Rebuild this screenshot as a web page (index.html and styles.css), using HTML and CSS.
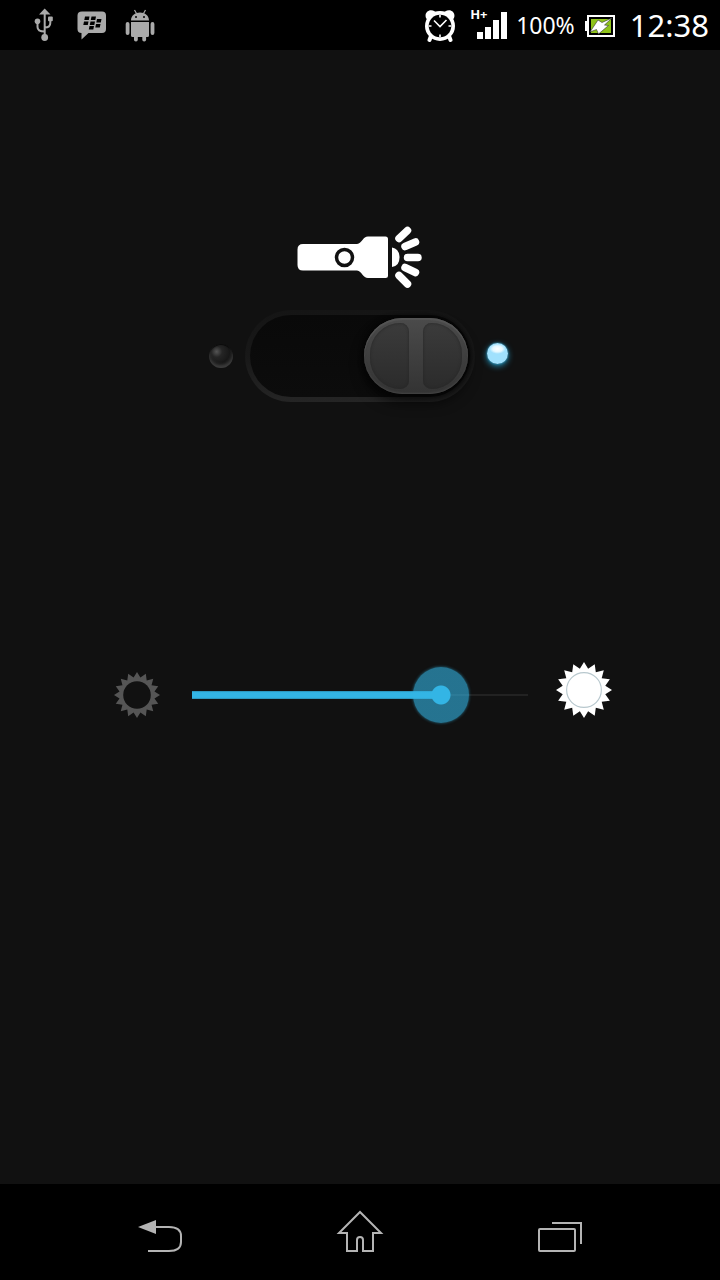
FILE: index.html
```html
<!DOCTYPE html>
<html lang="en">
<head>
<meta charset="utf-8">
<meta name="viewport" content="width=device-width, initial-scale=1">
<title>Flashlight</title>
<link rel="stylesheet" href="styles.css">
</head>
<body>
<div class="screen">
  <header class="status">
    <div class="notices">
      <svg class="notice" viewBox="20 0 48 50" role="img" aria-label="USB">
        <path d="M44.7 8.5 50.5 14.5H39Z"/>
        <path class="wire" d="M44.7 13V36M37.5 21V27Q37.5 31.5 44.7 31.5M50.3 19V23Q50.3 27.5 44.7 27.5"/>
        <circle cx="44.7" cy="37.5" r="3.4"/><circle cx="37.5" cy="21.3" r="2.8"/>
        <rect x="48" y="16.5" width="4.8" height="4.8" rx="1"/>
      </svg>
      <svg class="notice" viewBox="68 0 48 50" role="img" aria-label="Messenger">
        <path d="M82 11.5H102Q106 11.5 106 15.5V29Q106 33 102 33H88.5L81.5 39.5V33Q77.5 33 77.5 29V15.5Q77.5 11.5 82 11.5Z"/>
        <path class="hole" d="M85 16.500h4.500l-.7 3.500h-4.500zM91.500 16.500h4.500l-.7 3.500h-4.500zM84 21.500h4.500l-.7 3.500h-4.500zM90.500 21.500h4.500l-.7 3.500h-4.500zM97 19h4.500l-.7 3.500h-4.500zM96 24h4.500l-.7 3.500h-4.500zM89.500 26h4.500l-.7 3.500h-4.500z"/>
      </svg>
      <svg class="notice" viewBox="116 0 48 50" role="img" aria-label="Android">
        <path d="M131 20.5C131 15.5 135 12.5 140 12.5S149 15.5 149 20.5ZM131 22H149V35.5Q149 37 147.5 37H132.5Q131 37 131 35.5Z"/>
        <path class="antenna" d="M134.5 10 136.500 13.500M145.500 10 143.500 13.500"/>
        <rect x="125.700" y="22" width="3.800" height="13" rx="1.900"/><rect x="150.600" y="22" width="3.800" height="13" rx="1.900"/>
        <rect x="134" y="34" width="3.800" height="7.500" rx="1.800"/><rect x="142.300" y="34" width="3.800" height="7.500" rx="1.800"/>
        <circle class="hole" cx="136" cy="17" r="1"/><circle class="hole" cx="144" cy="17" r="1"/>
      </svg>
    </div>
    <div class="system">
      <svg class="alarm" viewBox="422 9 32 33" role="img" aria-label="Alarm set">
        <path d="M424 18C422 13 427 8 433 11.500L436 13.500H440L443 11.500C449 8 454 13 452 18L449 22H427Z"/>
        <circle cx="438" cy="26" r="15"/>
        <path class="feet" d="M429 36 427.500 40M447 36 448.500 40"/>
        <circle class="face" cx="438" cy="26" r="11.300"/>
        <path class="hands" d="M432 20.500 438 26.500 444.500 20M438 15V17.500M438 34.500V37M427 26H429.500M446.500 26H449"/>
      </svg>
      <div class="network">
        <span class="mode">H+</span>
        <svg class="bars" viewBox="476 12 30 27" role="img" aria-label="Full signal">
          <path d="M476 32h6v7h-6zM484 27h6v12h-6zM492 20h6v19h-6zM500 12h6v27h-6z"/>
        </svg>
      </div>
      <span class="percent">100%</span>
      <svg class="battery" viewBox="584 15 30 22" role="img" aria-label="Charging">
        <rect class="case" x="587" y="16" width="26" height="20"/>
        <path class="light" d="M584 21h2v10h-2z"/>
        <rect class="charge" x="590" y="19" width="20" height="14"/>
        <path class="bolt" d="M611 18 601 22.500 597 20 589 32 595.500 29.500 597.500 34 607.500 25.500 603.500 25Z"/>
      </svg>
      <time class="clock">12:38</time>
    </div>
  </header>

  <main class="panel">
    <svg class="torch" viewBox="295 224 130 66" role="img" aria-label="Flashlight">
      <path class="light" d="M303 244H357C362 243 363 236.500 368 236.500H385.500Q388 236.500 388 239V275.500Q388 278 385.500 278H368C363 278 362 271.500 357 270.500H303Q297.500 270.500 297.500 265V249.500Q297.500 244 303 244Z"/>
      <circle class="button-ring" cx="344.500" cy="257.500" r="8"/>
      <path class="light" d="M392 247.500Q399.500 249 399.500 257.500T392 267Z"/>
      <path class="beam" d="M399 238.500 407.500 230.500M405 246.500 415.500 242M407.500 257.500H418M405 267.500 415.500 272.500M399 275.500 407.500 284"/>
    </svg>
    <div class="toggle-row">
      <span class="led led-off"></span>
      <div class="switch">
        <input class="toggle" type="checkbox" role="switch" aria-label="Flashlight" checked>
        <div class="grip"><span class="dent dent-left"></span><span class="dent dent-right"></span></div>
      </div>
      <span class="led led-on"></span>
    </div>
    <div class="brightness">
      <svg class="sun-dim" viewBox="-100 -100 200 200" aria-hidden="true">
        <path d="M0-100 14.800-76 38.300-92.400 42.200-63.200 70.700-70.700 63.200-42.200 92.400-38.300 76-14.800 100 0 76 14.800 92.400 38.300 63.200 42.200 70.700 70.700 42.200 63.200 38.300 92.400 14.800 76 0 100-14.800 76-38.300 92.400-42.200 63.200-70.700 70.700-63.200 42.200-92.400 38.300-76 14.800-100 0-76-14.800-92.400-38.300-63.200-42.200-70.700-70.700-42.200-63.200-38.300-92.400-14.800-76Z"/>
        <circle r="60"/>
      </svg>
      <input class="slider" type="range" min="0" max="100" value="74" aria-label="Brightness">
      <svg class="sun-bright" viewBox="-100 -100 200 200" aria-hidden="true">
        <path d="M0-100 14.800-76 38.300-92.400 42.200-63.200 70.700-70.700 63.200-42.200 92.400-38.300 76-14.800 100 0 76 14.800 92.400 38.300 63.200 42.200 70.700 70.700 42.200 63.200 38.300 92.400 14.800 76 0 100-14.800 76-38.300 92.400-42.200 63.200-70.700 70.700-63.200 42.200-92.400 38.300-76 14.800-100 0-76-14.800-92.400-38.300-63.200-42.200-70.700-70.700-42.200-63.200-38.300-92.400-14.800-76Z"/>
        <circle r="62"/>
      </svg>
    </div>
  </main>

  <nav class="navbar">
    <button class="nav-button" type="button" aria-label="Back">
      <svg class="nav-icon" viewBox="136 1208 48 48"><path class="solid" d="M138 1227 156 1220V1234Z"/><path d="M156 1227H169Q181 1227 181 1236V1242Q181 1251 169 1251H148"/></svg>
    </button>
    <button class="nav-button" type="button" aria-label="Home">
      <svg class="nav-icon" viewBox="336 1208 48 48"><path d="M347 1233H339L360 1212 381 1233H373V1251H363V1240Q363 1237 360 1237T357 1240V1251H347Z"/></svg>
    </button>
    <button class="nav-button" type="button" aria-label="Recent apps">
      <svg class="nav-icon" viewBox="536 1208 48 48"><rect x="539" y="1229" width="36" height="22" rx="1"/><path d="M552 1223H581V1244"/></svg>
    </button>
  </nav>
</div>
</body>
</html>
```

FILE: styles.css
```css
* { box-sizing: border-box; }

body {
  margin: 0;
  background: #111;
  color: #fff;
  font-family: "Noto Sans", "Open Sans", sans-serif;
}

svg { display: block; }

.screen {
  display: flex;
  flex-direction: column;
  min-height: 100vh;
}

/* Status bar */
.status {
  display: flex;
  justify-content: space-between;
  height: 50px;
  padding: 0 11px 0 20px;
  background: #000;
}
.notices, .system { display: flex; align-items: center; }
.notice { width: 48px; height: 50px; fill: #aaa; }
.wire { fill: none; stroke: #aaa; stroke-width: 2; }
.antenna { stroke: #aaa; stroke-width: 1.2; }
.notice .hole { fill: #000; }

.alarm { width: 32px; height: 33px; fill: #fff; }
.feet { stroke: #fff; stroke-width: 4; stroke-linecap: round; }
.face { fill: #000; }
.hands { fill: none; stroke: #fff; stroke-width: 1.6; }

.network {
  position: relative;
  margin-left: 21px;
}
.bars { width: 30px; height: 27px; fill: #fff; }
.mode {
  position: absolute;
  left: -7px;
  top: -6px;
  font-size: 13px;
  line-height: 16px;
  font-weight: 700;
}
.percent { margin-left: 9px; font-size: 23px; line-height: 32px; }
.battery { width: 30px; height: 22px; margin: 2px 0 0 10px; }
.case { fill: #000; stroke: #fff; stroke-width: 2; }
.charge { fill: #8fc31a; }
.light { fill: #fff; }
.bolt { fill: #fff; stroke: #333; stroke-width: 0.6; }
.clock { margin-left: 15px; font-size: 31px; line-height: 48px; }

/* Controls */
.panel {
  flex: 1;
  display: flex;
  flex-direction: column;
  align-items: center;
  padding-top: 174px;
}
.torch { width: 130px; height: 66px; }
.button-ring { fill: #fff; stroke: #111; stroke-width: 3.5; }
.beam { stroke: #fff; stroke-width: 7.5; stroke-linecap: round; }

.toggle-row {
  display: grid;
  grid-template-columns: 1fr auto 1fr;
  align-items: center;
  column-gap: 12px;
  margin-top: 20px;
}
.led { border-radius: 50%; }
.led-off {
  justify-self: end;
  width: 24px;
  height: 24px;
  background: radial-gradient(circle at 32% 32%, #555 0, #252525 24%, #181818 55%, #222 75%);
  box-shadow: inset 0 -3px 3px #3c3c3c, inset 0 1px 1px #0a0a0a;
}
.led-on {
  justify-self: start;
  width: 21px;
  height: 21px;
  margin-bottom: 5px;
  background: radial-gradient(8px 5px at 50% 28%, #fff, #e4f8ff 60%, #a0e1fd 100%);
  box-shadow: 0 0 2px #37b4e4, 0 2px 6px #2391b8;
}
.switch { position: relative; }
.toggle {
  appearance: none;
  display: block;
  width: 230px;
  height: 92px;
  margin: 0;
  border-radius: 46px;
  background:
    linear-gradient(#090909, #0c0c0c) padding-box,
    linear-gradient(#151515, #181818 50%, #252525) border-box;
  border: 5px solid transparent;
}
.grip {
  position: absolute;
  right: 7px;
  top: 8px;
  display: flex;
  justify-content: space-between;
  width: 104px;
  height: 76px;
  padding: 5px 6px;
  border-radius: 38px;
  background: linear-gradient(#4b4b4b, #333);
  box-shadow: inset 0 2px 1px #555, inset 0 -1px 2px #454545, 0 0 4px 2px #050505, 0 8px 12px 2px rgba(0, 0, 0, 0.5);
  pointer-events: none;
}
.dent {
  width: 39px;
  background: linear-gradient(#3b3b3b, #2b2b2b);
  box-shadow: inset 0 0 3px #262626;
}
.dent-left { border-radius: 33px 9px 9px 33px; }
.dent-right { border-radius: 9px 33px 33px 9px; }

.brightness {
  display: flex;
  align-items: center;
  margin-top: 260px;
  padding-left: 6px;
}
.sun-dim { width: 46px; height: 46px; fill: #555; }
.sun-dim circle { fill: #111; }
.sun-bright { width: 56px; height: 56px; margin-bottom: 10px; fill: #fff; }
.sun-bright circle { fill: none; stroke: #b8c8ce; stroke-width: 4; }
.slider {
  appearance: none;
  width: 392px;
  height: 58px;
  margin: 0 0 0 4px;
  background:
    linear-gradient(#298bb0, #33b5e5 20%, #33b5e5 80%, #298bb0) 28px 50% / 249px 8px no-repeat,
    linear-gradient(#222, #222) 28px 50% / 336px 2px no-repeat;
}
.slider::-webkit-slider-thumb {
  appearance: none;
  width: 56px;
  height: 56px;
  border-radius: 50%;
  background: radial-gradient(circle, #33b5e5 9px, rgba(51, 181, 229, 0.6) 10px);
  box-shadow: 0 0 3px rgba(51, 181, 229, 0.6);
}

/* Navigation bar */
.navbar {
  display: grid;
  grid-template-columns: repeat(3, 200px);
  justify-content: center;
  height: 96px;
  background: #000;
}
.nav-button {
  display: flex;
  align-items: center;
  justify-content: center;
  padding: 0;
  border: 0;
  background: none;
}
.nav-icon { width: 48px; height: 48px; fill: none; stroke: #b4b4b4; stroke-width: 2; }
.nav-icon .solid { fill: #b4b4b4; stroke: none; }
```
